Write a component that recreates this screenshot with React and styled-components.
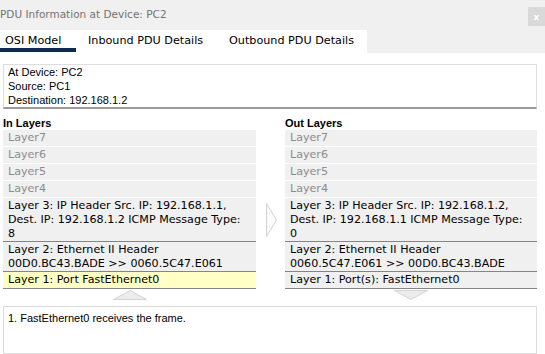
import React from "react";
import styled, { createGlobalStyle } from "styled-components";

const Global = createGlobalStyle`
  html, body { margin: 0; padding: 0; background: #ffffff; overflow: hidden; }
  * { box-sizing: border-box; }
`;

const Window = styled.div`
  width: 545px;
  height: 354px;
  display: flex;
  flex-direction: column;
  background: #ffffff;
  overflow: hidden;
  font-family: "DejaVu Sans", Verdana, sans-serif;
`;

const TitleBar = styled.div`
  height: 30px;
  flex: none;
  background: #f0f0f0;
  display: flex;
  justify-content: space-between;
  align-items: flex-start;
  padding-top: 7px;
`;

const Title = styled.div`
  font-size: 10.5px;
  line-height: 14px;
  color: #737373;
  white-space: nowrap;
`;

const CloseButton = styled.div`
  width: 19px;
  height: 19px;
  margin-right: -2px;
  background: #d9d9d9;
  color: #ffffff;
  font-family: "DejaVu Sans", sans-serif;
  font-weight: bold;
  font-size: 9px;
  display: flex;
  align-items: center;
  justify-content: center;
  padding-right: 2px;
`;

const TabBar = styled.div`
  height: 23px;
  flex: none;
  background: #f0f0f0;
  display: flex;
`;

const TabStrip = styled.div`
  display: flex;
  background: #ffffff;
  margin-left: -7px;
`;

const Tab = styled.div`
  width: ${(p) => p.$w}px;
  height: 22px;
  padding: 4px 0 0 12px;
  font-size: 11.2px;
  line-height: 14px;
  color: #000;
  white-space: nowrap;
  border-bottom: 4px solid ${(p) => (p.$active ? "#0e2a4c" : "transparent")};
`;

const Content = styled.div`
  flex: 1;
  display: flex;
  flex-direction: column;
  padding: 11px 8px 0 3px;
`;

const InfoBox = styled.div`
  border: 1px solid #dedede;
  border-bottom: 2px solid #9a9a9a;
  padding: 0 4px;
  font-family: "Liberation Sans", Arial, sans-serif;
  font-size: 11px;
  line-height: 14px;
  color: #000;
`;

const Columns = styled.div`
  margin-top: 7px;
  display: grid;
  grid-template-columns: 253px 29px 252px;
`;

const Column = styled.div`
  display: flex;
  flex-direction: column;
`;

const Middle = styled.div`
  display: flex;
  justify-content: center;
  padding-top: 87px;
  padding-left: 2px;
`;

const ColumnHeader = styled.div`
  font-family: "Liberation Sans", Arial, sans-serif;
  font-weight: bold;
  font-size: 11px;
  line-height: 14px;
  color: #000;
`;

const Row = styled.div`
  background: ${(p) => (p.$highlight ? "#ffffc6" : "#f0f0f0")};
  color: ${(p) => (p.$dim ? "#8c8c8c" : "#000")};
  font-size: 11.1px;
  line-height: 14px;
  padding: 1px 5px ${(p) => (p.$multi ? 0 : 1)}px;
  border-bottom: 1px solid ${(p) => (p.$dark ? "#858585" : "#ffffff")};
  white-space: nowrap;
  overflow: hidden;
`;

const Line = styled.div``;

const ArrowWrap = styled.div`
  display: flex;
  justify-content: center;
  margin-top: 1px;
  height: 10px;
`;

const MessageBox = styled.div`
  margin-top: 6px;
  flex: 1;
  border: 1px solid #dcdcdc;
  padding: 4px 4px;
  font-family: "Liberation Sans", Arial, sans-serif;
  font-size: 11px;
  line-height: 14px;
  color: #000;
`;

const Chevron = () => (
  <svg width="12" height="35" viewBox="0 0 12 35">
    <polygon points="0.5,0.5 10.5,17 0.5,33.5" fill="#fbfbfb" stroke="#d2d2d2" strokeWidth="1" />
  </svg>
);

const Triangle = ({ up }) => (
  <svg width="34" height="10" viewBox="0 0 34 10">
    {up ? (
      <polygon points="0.5,9.5 17,0.5 33.5,9.5" fill="#ececec" stroke="#d4d4d4" strokeWidth="1" />
    ) : (
      <polygon points="0.5,0.5 17,9.5 33.5,0.5" fill="#ececec" stroke="#d4d4d4" strokeWidth="1" />
    )}
  </svg>
);

const LayerRow = ({ lines, dim, dark, highlight }) => (
  <Row $dim={dim} $dark={dark} $highlight={highlight} $multi={lines.length > 1}>
    {lines.map((l, i) => (
      <Line key={i}>{l}</Line>
    ))}
  </Row>
);

const inLayers = [
  { lines: ["Layer 3: IP Header Src. IP: 192.168.1.1,", "Dest. IP: 192.168.1.2 ICMP Message Type:", "8"] },
  { lines: ["Layer 2: Ethernet II Header", "00D0.BC43.BADE >> 0060.5C47.E061"] },
  { lines: ["Layer 1: Port FastEthernet0"], highlight: true },
];

const outLayers = [
  { lines: ["Layer 3: IP Header Src. IP: 192.168.1.2,", "Dest. IP: 192.168.1.1 ICMP Message Type:", "0"] },
  { lines: ["Layer 2: Ethernet II Header", "0060.5C47.E061 >> 00D0.BC43.BADE"] },
  { lines: ["Layer 1: Port(s): FastEthernet0"] },
];

const upper = ["Layer7", "Layer6", "Layer5", "Layer4"];

const LayerColumn = ({ title, layers, up }) => (
  <Column>
    <ColumnHeader>{title}</ColumnHeader>
    {upper.map((u) => (
      <LayerRow key={u} lines={[u]} dim />
    ))}
    {layers.map((l, i) => (
      <LayerRow key={i} lines={l.lines} dark highlight={l.highlight} />
    ))}
    <ArrowWrap>
      <Triangle up={up} />
    </ArrowWrap>
  </Column>
);

export default function App() {
  return (
    <>
      <Global />
      <Window>
        <TitleBar>
          <Title>PDU Information at Device: PC2</Title>
          <CloseButton>x</CloseButton>
        </TitleBar>
        <TabBar>
          <TabStrip>
            <Tab $w={83} $active>OSI Model</Tab>
            <Tab $w={141}>Inbound PDU Details</Tab>
            <Tab $w={150}>Outbound PDU Details</Tab>
          </TabStrip>
        </TabBar>
        <Content>
          <InfoBox>
            <div>At Device: PC2</div>
            <div>Source: PC1</div>
            <div>Destination: 192.168.1.2</div>
          </InfoBox>
          <Columns>
            <LayerColumn title="In Layers" layers={inLayers} up />
            <Middle>
              <Chevron />
            </Middle>
            <LayerColumn title="Out Layers" layers={outLayers} />
          </Columns>
          <MessageBox>1. FastEthernet0 receives the frame.</MessageBox>
        </Content>
      </Window>
    </>
  );
}
